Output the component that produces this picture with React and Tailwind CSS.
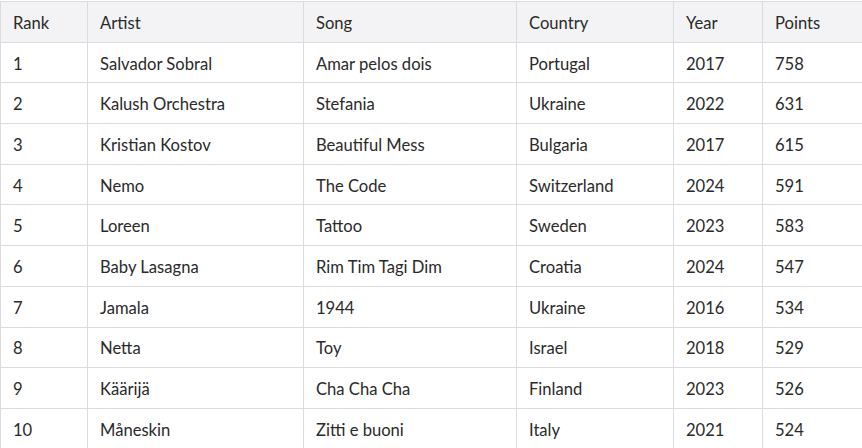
const rows = [
  [1, "Salvador Sobral", "Amar pelos dois", "Portugal", 2017, 758],
  [2, "Kalush Orchestra", "Stefania", "Ukraine", 2022, 631],
  [3, "Kristian Kostov", "Beautiful Mess", "Bulgaria", 2017, 615],
  [4, "Nemo", "The Code", "Switzerland", 2024, 591],
  [5, "Loreen", "Tattoo", "Sweden", 2023, 583],
  [6, "Baby Lasagna", "Rim Tim Tagi Dim", "Croatia", 2024, 547],
  [7, "Jamala", "1944", "Ukraine", 2016, 534],
  [8, "Netta", "Toy", "Israel", 2018, 529],
  [9, "Käärijä", "Cha Cha Cha", "Finland", 2023, 526],
  [10, "Måneskin", "Zitti e buoni", "Italy", 2021, 524],
];

const headers = ["Rank", "Artist", "Song", "Country", "Year", "Points"];

export default function App() {
  return (
    <div className="h-[448px] w-[862px] overflow-hidden bg-white pt-px" style={{ fontFamily: "Lato, 'Noto Sans', sans-serif" }}>
      <table className="w-[900px] table-fixed border-collapse text-[16.6px] text-[#2a2a2a]">
        <colgroup>
          <col className="w-[87px]" />
          <col className="w-[216px]" />
          <col className="w-[213px]" />
          <col className="w-[157px]" />
          <col className="w-[89px]" />
          <col />
        </colgroup>
        <thead>
          <tr className="h-[40.7px] bg-[#f3f3f5]">
            {headers.map((h) => (
              <th key={h} className="border border-[#dcdcdf] px-3 pt-[3px] pb-0 text-left font-normal">
                {h}
              </th>
            ))}
          </tr>
        </thead>
        <tbody>
          {rows.map((r) => (
            <tr key={r[0]} className="h-[40.7px]">
              {r.map((c, i) => (
                <td key={i} className="border border-[#dcdcdf] px-3 pt-[3px] pb-0">
                  {c}
                </td>
              ))}
            </tr>
          ))}
        </tbody>
      </table>
    </div>
  );
}
